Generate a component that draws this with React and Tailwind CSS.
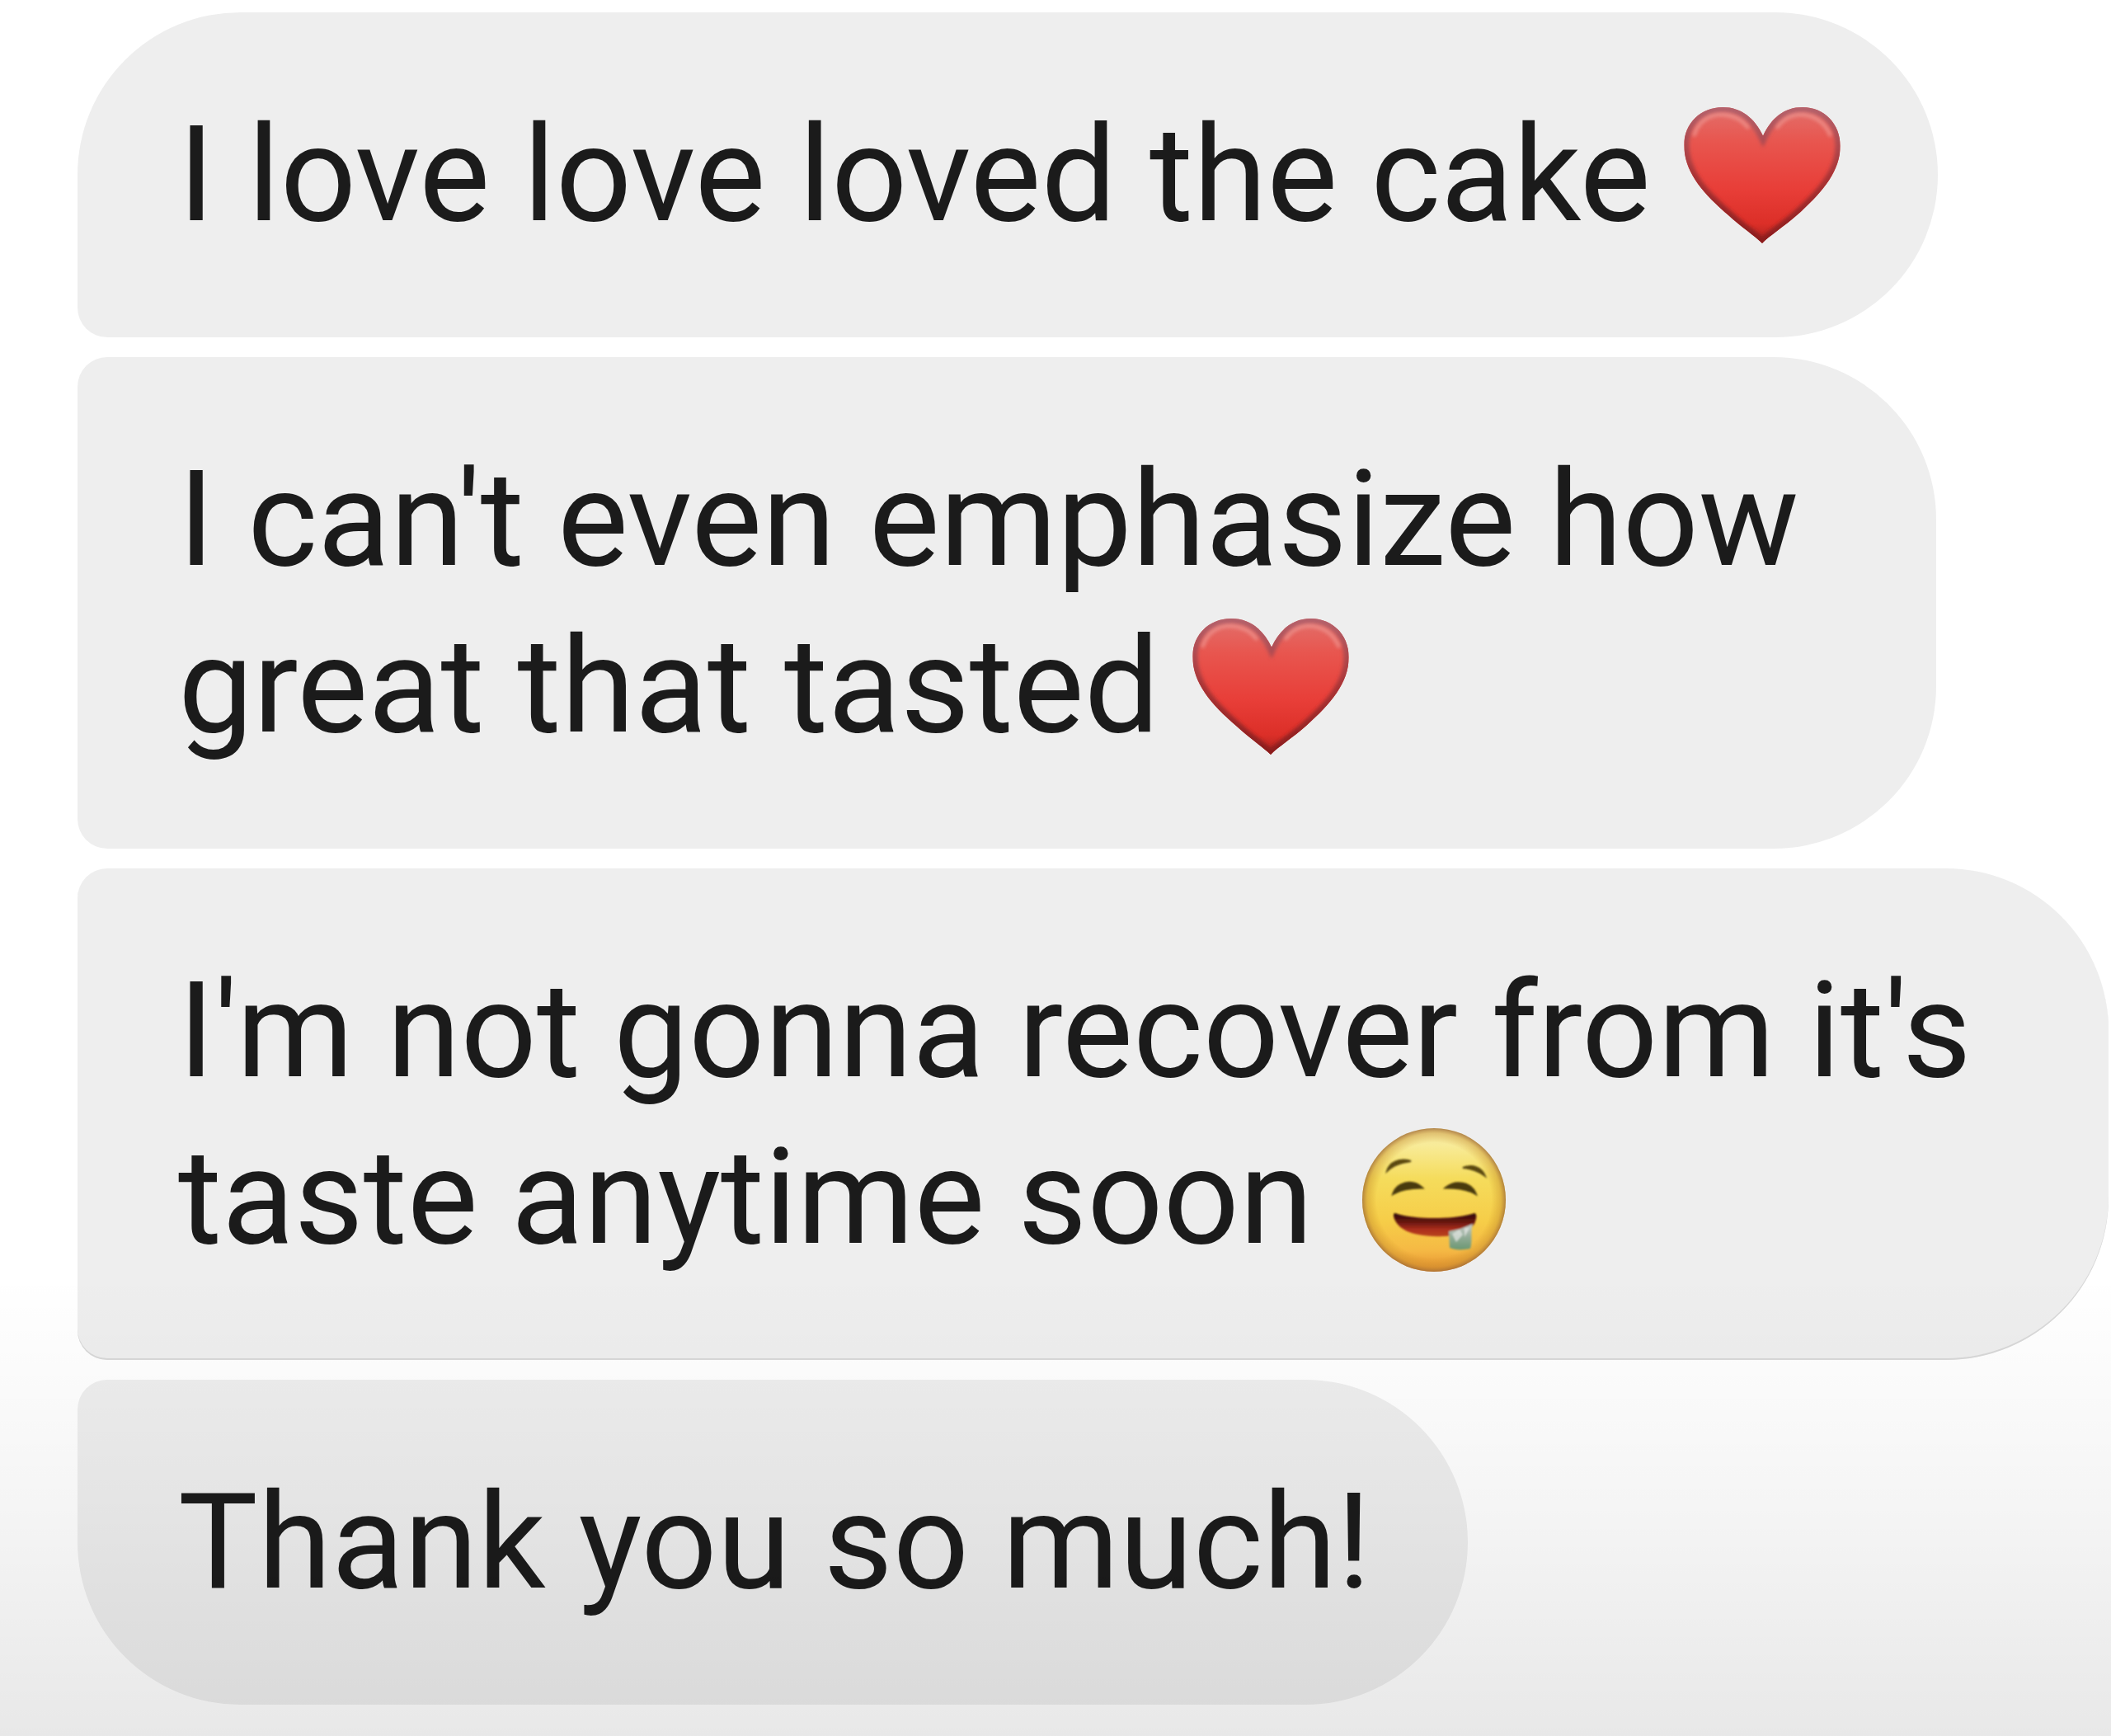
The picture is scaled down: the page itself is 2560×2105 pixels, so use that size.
import React from 'react';

const messages = [
  {
    lines: ['I love love loved the cake'],
    emoji: 'heart',
    shape: 'rounded-l-[36px] rounded-tl-[197px] rounded-r-[197px] pr-[118px]',
  },
  {
    lines: ["I can't even emphasize how", 'great that tasted'],
    emoji: 'heart',
    shape: 'rounded-l-[36px] rounded-r-[197px] pr-[166px]',
  },
  {
    lines: ["I'm not gonna recover from it's", 'taste anytime soon'],
    emoji: 'drool',
    shape:
      'rounded-l-[36px] rounded-r-[197px] pr-[166px] shadow-[inset_0_-2px_0_#d8d8d8]',
  },
  {
    lines: ['Thank you so much!'],
    shape: 'rounded-l-[36px] rounded-bl-[197px] rounded-r-[197px] pr-[118px]',
  },
];

function Heart() {
  return (
    <svg
      viewBox="2 0 186 164"
      role="img"
      aria-label="red heart"
      className="ml-[40px] inline-block h-[167px] w-[190px] align-[-29px]"
    >
      <defs>
        <linearGradient id="heart-fill" x1="0" y1="0" x2="0" y2="1">
          <stop offset="0" stopColor="#e2706c" />
          <stop offset="0.25" stopColor="#e8564f" />
          <stop offset="0.6" stopColor="#e83e38" />
          <stop offset="0.85" stopColor="#dc2f28" />
          <stop offset="1" stopColor="#a8221f" />
        </linearGradient>
        <linearGradient id="heart-edge" x1="0" y1="0" x2="0" y2="1">
          <stop offset="0" stopColor="#b4626c" />
          <stop offset="0.5" stopColor="#a83436" />
          <stop offset="1" stopColor="#8a1c1c" />
        </linearGradient>
        <clipPath id="heart-clip">
          <path d="M95 163C86 154 70 144 54 129C24 103 2 78 2 46C2 20 22 1 48 1C70 1 86 14 96 35C106 14 121 1 143 1C169 1 188 21 188 47C188 78 166 103 137 129C121 143 104 154 95 163Z" />
        </clipPath>
        <filter id="heart-soft" x="-20%" y="-60%" width="140%" height="220%">
          <feGaussianBlur stdDeviation="2" />
        </filter>
      </defs>
      <g clipPath="url(#heart-clip)">
        <rect width="190" height="164" fill="url(#heart-fill)" />
        <path
          d="M95 163C86 154 70 144 54 129C24 103 2 78 2 46C2 20 22 1 48 1C70 1 86 14 96 35C106 14 121 1 143 1C169 1 188 21 188 47C188 78 166 103 137 129C121 143 104 154 95 163Z"
          fill="none"
          stroke="url(#heart-edge)"
          strokeWidth="12"
          filter="url(#heart-soft)"
        />
        <path
          d="M14 34C20 15 35 9 50 10C62 11 71 16 78 25M113 25C122 12 134 9 145 10C159 12 170 20 176 34"
          fill="none"
          stroke="#f09a94"
          strokeWidth="4"
          strokeLinecap="round"
          opacity="0.8"
          filter="url(#heart-soft)"
        />
      </g>
    </svg>
  );
}

function DroolingFace() {
  return (
    <svg
      viewBox="0 0 174 176"
      role="img"
      aria-label="drooling face"
      className="ml-[60px] inline-block h-[176px] w-[174px] align-[-36px]"
    >
      <defs>
        <linearGradient id="face-fill" x1="0" y1="0" x2="0" y2="1">
          <stop offset="0" stopColor="#f3e6a4" />
          <stop offset="0.12" stopColor="#f8eb98" />
          <stop offset="0.35" stopColor="#f5dc5c" />
          <stop offset="0.65" stopColor="#f6cd48" />
          <stop offset="0.85" stopColor="#f5b944" />
          <stop offset="1" stopColor="#e58f30" />
        </linearGradient>
        <radialGradient id="face-edge">
          <stop offset="0.8" stopColor="#c98a1e" stopOpacity="0" />
          <stop offset="0.93" stopColor="#c2882a" stopOpacity="0.4" />
          <stop offset="1" stopColor="#a06c38" stopOpacity="0.8" />
        </radialGradient>
        <linearGradient id="mouth-fill" x1="0" y1="0" x2="0" y2="1">
          <stop offset="0" stopColor="#2c0a06" />
          <stop offset="0.4" stopColor="#6a1710" />
          <stop offset="0.7" stopColor="#ac2f1c" />
          <stop offset="1" stopColor="#b8421f" />
        </linearGradient>
        <linearGradient id="drool-fill" x1="0" y1="0" x2="0" y2="1">
          <stop offset="0" stopColor="#c9cdca" />
          <stop offset="0.5" stopColor="#93ac98" />
          <stop offset="1" stopColor="#6b9872" />
        </linearGradient>
        <filter id="face-soft" x="-20%" y="-20%" width="140%" height="140%">
          <feGaussianBlur stdDeviation="1" />
        </filter>
      </defs>
      <circle cx="87" cy="88" r="87" fill="url(#face-fill)" />
      <circle cx="87" cy="88" r="87" fill="url(#face-edge)" />
      <g filter="url(#face-soft)">
        <path
          d="M30 53C33 42 45 37 59 41C48 43 38 45 30 53ZM122 49C134 44 145 49 149 59C141 53 133 50 122 49Z"
          fill="#5b4a12"
          stroke="#5b4a12"
          strokeWidth="2"
        />
        <path
          d="M38 80C42 68 60 62 72 73C60 73 48 74 38 80ZM102 73C113 64 132 67 137 80C127 74 114 73 102 73Z"
          fill="#4a3a0c"
          stroke="#4a3a0c"
          strokeWidth="3"
        />
        <path
          d="M40 104C62 112 112 112 136 104C140 105 138 112 136 117C128 130 108 133 86 132C60 131 42 124 38 108C38 105 38 104 40 104Z"
          fill="url(#mouth-fill)"
        />
        <path
          d="M105 126L119 123L134 117C131 127 134 138 131 147C122 149 112 149 106 146Z"
          fill="url(#drool-fill)"
        />
        <path
          d="M109 129L118 124L122 130L114 139ZM124 122L130 122L124 133Z"
          fill="#e6e8e6"
          opacity="0.7"
        />
      </g>
    </svg>
  );
}

function Emoji({ name }) {
  if (name === 'heart') return <Heart />;
  if (name === 'drool') return <DroolingFace />;
  return null;
}

function Bubble({ message }) {
  return (
    <li className={`bg-[#eeeeee] py-[96px] pl-[122px] ${message.shape}`}>
      {message.lines.map((line, idx) => (
        <p key={line} className="h-[202px] leading-[202px] whitespace-nowrap">
          {line}
          {idx === message.lines.length - 1 && <Emoji name={message.emoji} />}
        </p>
      ))}
    </li>
  );
}

export default function App() {
  return (
    <main className="relative min-h-screen overflow-hidden bg-white font-['Roboto',sans-serif] text-[162px] text-[#1b1b1b]">
      <ul className="flex flex-col items-start gap-[24px] pt-[15px] pb-[36px] pl-[94px]">
        {messages.map((message) => (
          <Bubble key={message.lines[0]} message={message} />
        ))}
      </ul>
      {/* shade that fades in over the end of the thread */}
      <div className="pointer-events-none absolute inset-x-0 bottom-0 h-[560px] bg-linear-to-b from-black/0 via-black/4 to-black/9" />
    </main>
  );
}
